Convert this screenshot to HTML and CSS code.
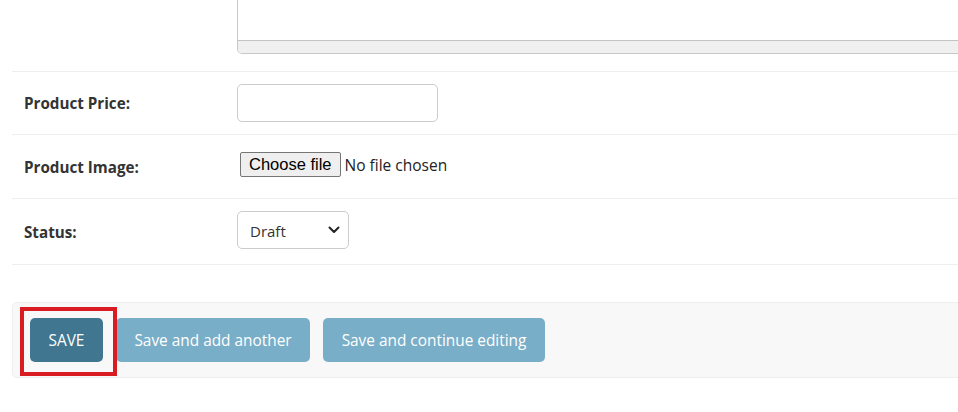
FILE: index.html
```html
<!DOCTYPE html>
<html lang="en">
<head>
<meta charset="utf-8">
<title>Add product</title>
<link rel="stylesheet" href="styles.css">
</head>
<body>
<form class="form">
  <fieldset class="module">
    <div class="form-row row-text">
      <div class="label-cell"></div>
      <div class="textarea-box">
        <div class="textarea-body"></div>
        <div class="textarea-scroll"></div>
      </div>
    </div>
    <div class="form-row row-price">
      <label class="label-cell" for="price">Product Price:</label>
      <input class="text-input" id="price" type="text">
    </div>
    <div class="form-row row-image">
      <label class="label-cell">Product Image:</label>
      <div class="file-input">
        <span class="file-btn">Choose file</span>
        <span class="file-name">No file chosen</span>
      </div>
    </div>
    <div class="form-row row-status">
      <label class="label-cell">Status:</label>
      <div class="select">
        <span class="select-value">Draft</span>
        <svg class="chev" width="12" height="8" viewBox="0 0 12 8"><path d="M1.5 1.5 L6 6 L10.5 1.5" fill="none" stroke="#222" stroke-width="2" stroke-linecap="round" stroke-linejoin="round"/></svg>
      </div>
    </div>
  </fieldset>
  <div class="submit-row">
    <span class="save-wrap">
      <button type="button" class="btn btn-default">SAVE</button>
      <span class="highlight"></span>
    </span>
    <button type="button" class="btn">Save and add another</button>
    <button type="button" class="btn">Save and continue editing</button>
  </div>
</form>
</body>
</html>
```
FILE: styles.css
```css
* { box-sizing: border-box; }
html, body { margin: 0; padding: 0; background: #fff; }
body {
  font-family: "Open Sans", "Noto Sans", sans-serif;
  color: #333;
  overflow: hidden;
  width: 958px;
  height: 412px;
}
.form { padding-left: 12px; width: 1000px; }
.module { border: 0; margin: 0; padding: 0; }
.form-row {
  display: flex;
  align-items: center;
  border-bottom: 1px solid #eee;
  padding-left: 12px;
}
.label-cell {
  width: 213px;
  flex: none;
  font-weight: 700;
  font-size: 15.2px;
  color: #333;
}
.row-text { align-items: flex-start; padding-bottom: 17px; height: 72px; }
.textarea-box {
  width: 760px;
  height: 54px;
  border: 1px solid #c8c8c8;
  border-top: none;
  border-radius: 0 0 5px 5px;
  display: flex;
  flex-direction: column;
  overflow: hidden;
}
.textarea-body { flex: 1; background: #fff; }
.textarea-scroll { height: 13px; background: #f0f0f0; border-top: 1px solid #c4c4c4; }
.row-price { height: 63px; }
.text-input {
  width: 201px;
  height: 38px;
  border: 1px solid #ccc;
  border-radius: 5px;
  margin: 0;
  padding: 0 8px;
  font: inherit;
  background: #fff;
}
.row-image { height: 64px; }
.file-input { display: flex; align-items: center; margin-left: 3px; margin-top: -4px; }
.file-btn {
  font-family: "Liberation Sans", Arial, sans-serif;
  font-size: 16.5px;
  color: #000;
  background: #efefef;
  border: 1px solid #767676;
  border-radius: 2px;
  padding: 1px 8px 2px;
  line-height: 20px;
}
.file-name { font-size: 15.5px; color: #222; margin-left: 4px; }
.row-status { height: 66px; }
.select {
  width: 112px;
  height: 38px;
  border: 1px solid #ccc;
  border-radius: 5px;
  display: flex;
  align-items: center;
  justify-content: space-between;
  padding: 0 8px 0 12px;
  margin-top: -4px;
}
.select-value { font-size: 15px; color: #333; padding-top: 2px; }
.submit-row {
  margin-top: 37px;
  display: flex;
  gap: 13px;
  padding: 15px 17px;
  background: #f8f8f8;
  border: 1px solid #eee;
  border-radius: 5px;
  width: 1000px;
}
.save-wrap { position: relative; display: flex; }
.btn {
  height: 44px;
  padding: 0 18.5px;
  border: 0;
  border-radius: 5px;
  background: #79aec8;
  color: #fff;
  font-family: "Open Sans", "Noto Sans", sans-serif;
  font-size: 15.4px;
}
.btn-default { background: #417690; }
.highlight {
  position: absolute;
  left: -10px;
  top: -11px;
  right: -14px;
  bottom: -14px;
  border: 4px solid #d81c22;
  pointer-events: none;
}
```
